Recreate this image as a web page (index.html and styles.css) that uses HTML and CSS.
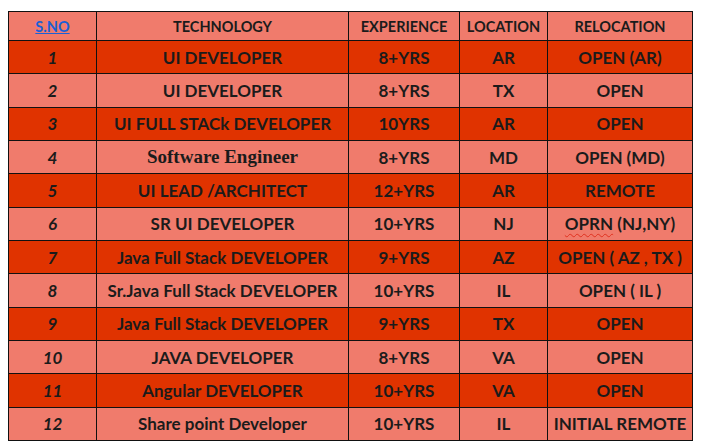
FILE: index.html
```html
<!DOCTYPE html>
<html>
<head>
<meta charset="utf-8">
<link rel="stylesheet" href="styles.css">
</head>
<body>
<table class="grid">
  <colgroup>
    <col class="c1"><col class="c2"><col class="c3"><col class="c4"><col class="c5">
  </colgroup>
  <thead>
    <tr class="head">
      <th><span class="link">S.NO</span></th>
      <th>TECHNOLOGY</th>
      <th>EXPERIENCE</th>
      <th>LOCATION</th>
      <th>RELOCATION</th>
    </tr>
  </thead>
  <tbody>
    <tr class="dark"><td class="num">1</td><td>UI DEVELOPER</td><td>8+YRS</td><td>AR</td><td>OPEN (AR)</td></tr>
    <tr class="light"><td class="num">2</td><td>UI DEVELOPER</td><td>8+YRS</td><td>TX</td><td>OPEN</td></tr>
    <tr class="dark"><td class="num">3</td><td>UI FULL STACk DEVELOPER</td><td>10YRS</td><td>AR</td><td>OPEN</td></tr>
    <tr class="light"><td class="num">4</td><td class="serif">Software Engineer</td><td>8+YRS</td><td>MD</td><td>OPEN (MD)</td></tr>
    <tr class="dark"><td class="num">5</td><td>UI LEAD /ARCHITECT</td><td>12+YRS</td><td>AR</td><td>REMOTE</td></tr>
    <tr class="light"><td class="num">6</td><td>SR UI DEVELOPER</td><td>10+YRS</td><td>NJ</td><td><span class="spell">OPRN</span> (NJ,NY)</td></tr>
    <tr class="dark"><td class="num">7</td><td>Java Full Stack DEVELOPER</td><td>9+YRS</td><td>AZ</td><td>OPEN ( AZ , TX )</td></tr>
    <tr class="light"><td class="num">8</td><td>Sr.Java Full Stack DEVELOPER</td><td>10+YRS</td><td>IL</td><td>OPEN ( IL )</td></tr>
    <tr class="dark"><td class="num">9</td><td>Java Full Stack DEVELOPER</td><td>9+YRS</td><td>TX</td><td>OPEN</td></tr>
    <tr class="light"><td class="num">10</td><td>JAVA DEVELOPER</td><td>8+YRS</td><td>VA</td><td>OPEN</td></tr>
    <tr class="dark"><td class="num">11</td><td>Angular DEVELOPER</td><td>10+YRS</td><td>VA</td><td>OPEN</td></tr>
    <tr class="light"><td class="num">12</td><td>Share point Developer</td><td>10+YRS</td><td>IL</td><td>INITIAL REMOTE</td></tr>
  </tbody>
</table>
</body>
</html>
```
FILE: styles.css
```css
html, body {
  margin: 0;
  padding: 0;
  background: #ffffff;
}
body {
  padding: 11px 0 0 8px;
  font-family: Lato, "Liberation Sans", sans-serif;
  color: #1b1b1b;
}
.grid {
  border-collapse: collapse;
  table-layout: fixed;
  width: 685px;
}
.c1 { width: 88px; }
.c2 { width: 252px; }
.c3 { width: 111px; }
.c4 { width: 88px; }
.c5 { width: 145px; }
.grid th, .grid td {
  border: 1.5px solid #111;
  text-align: center;
  vertical-align: middle;
  padding: 0;
  font-weight: 700;
  white-space: nowrap;
  overflow: hidden;
}
.head th {
  height: 28px;
  font-size: 14.5px;
  background: #f07b6c;
}
.grid td {
  height: 32.33px;
  font-size: 17px;
}
.dark td { background: #e03300; }
.light td { background: #f07b6c; }
.num { font-style: italic; }
.grid td.serif {
  font-family: "Liberation Serif", serif;
  font-size: 19px;
}
.link {
  color: #1a5fd6;
  text-decoration: underline;
}
.spell {
  text-decoration: underline wavy #e0301e;
  text-decoration-thickness: 1px;
  text-underline-offset: 3px;
}
```
